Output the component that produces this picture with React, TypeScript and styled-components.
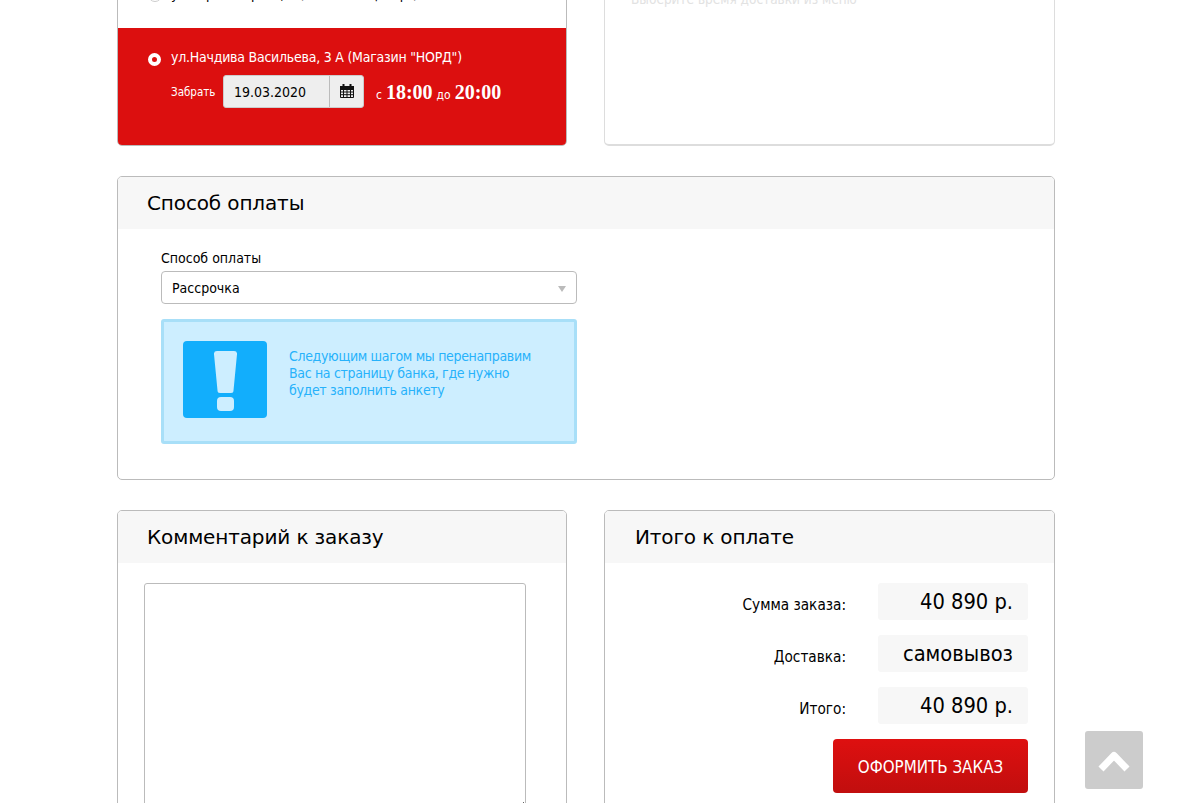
import React from "react";
import styled, { createGlobalStyle } from "styled-components";

const Global = createGlobalStyle`
  html, body { margin: 0; padding: 0; height: 100%; overflow: hidden; background: #fff; }
  * { box-sizing: border-box; }
  body { font-family: "DejaVu Sans", sans-serif; font-stretch: condensed; color: #000; }
`;

const Viewport = styled.div`
  height: 803px;
  overflow: hidden;
  position: relative;
`;
const Page = styled.div`
  width: 938px;
  margin: -72px 0 0 117px;
  display: flex;
  flex-direction: column;
  gap: 30px;
`;
const Row = styled.div`
  display: grid;
  grid-template-columns: 450px 451px;
  column-gap: 37px;
`;
const Card = styled.section<{ $height?: number }>`
  border: 1px solid #bbb;
  border-radius: 5px;
  overflow: hidden;
  background: #fff;
  height: ${(p) => (p.$height ? `${p.$height}px` : "auto")};
`;
const SoftCard = styled(Card)`
  border: 1px solid #ddd;
  border-bottom-width: 2px;
  padding: 62px 0 0 26px;
`;
const AddressCard = styled(Card)`
  display: flex;
  flex-direction: column;
  justify-content: flex-end;
`;
const Header = styled.h2<{ $inset?: number }>`
  margin: 0;
  height: 52px;
  padding: 0 0 0 ${(p) => p.$inset ?? 29}px;
  background: #f7f7f7;
  font-family: "DejaVu Sans", sans-serif;
  font-stretch: normal;
  font-weight: 400;
  font-size: 20px;
  line-height: 53px;
  letter-spacing: -0.13px;
  color: #000;
`;
const Hint = styled.p`
  margin: 0;
  font-size: 13.5px;
  color: #e2e2e2;
`;
const PlainAddress = styled.div`
  height: 100px;
  padding: 56px 0 0 30px;
  display: flex;
  gap: 9px;
  font-size: 14px;
  letter-spacing: -0.24px;
  line-height: 18px;
`;
const RadioOff = styled.span`
  flex: none;
  width: 14px;
  height: 14px;
  margin-top: 3px;
  border: 1px solid #ccc;
  border-radius: 50%;
  background: #fff;
`;
const RedAddress = styled.div`
  height: 118px;
  background: #dc0f0f;
  padding: 20px 0 0 30px;
  color: #fff;
`;
const AddressLine = styled.div`
  display: flex;
  align-items: center;
  gap: 10px;
  font-size: 14px;
  letter-spacing: -0.24px;
  line-height: 18px;
`;
const RadioOn = styled.span`
  width: 13px;
  height: 13px;
  border-radius: 50%;
  border: 4px solid #fff;
  background: #dc0f0f;
  margin-top: 4px;
`;
const PickupLine = styled.div`
  display: flex;
  align-items: center;
  margin: 9px 0 0 23px;
`;
const PickupLabel = styled.span`
  font-size: 11.5px;
  width: 52px;
`;
const DateBox = styled.div`
  display: flex;
  width: 141px;
  height: 33px;
  border-radius: 3px;
  background: #eee;
  border: 1px solid #ccc;
  color: #000;
  overflow: hidden;
`;
const DateValue = styled.span`
  width: 106px;
  padding-left: 10px;
  border-right: 1px solid #bbb;
  font-size: 14px;
  line-height: 32px;
`;
const DateIcon = styled.span`
  flex: 1;
  display: flex;
  align-items: center;
  justify-content: center;
  padding-bottom: 2px;
`;
const TimeLine = styled.span`
  margin-left: 12px;
  padding-top: 2px;
  font-size: 12px;
  display: flex;
  align-items: baseline;
  gap: 4px;
`;
const Time = styled.b`
  font-family: "Liberation Serif", serif;
  font-stretch: normal;
  font-size: 20px;
  font-weight: 700;
`;
const PaymentBody = styled.div`
  height: 250px;
  padding: 20px 0 0 43px;
`;
const FieldLabel = styled.label`
  display: block;
  font-size: 14px;
  line-height: 18px;
  height: 22px;
`;
const Select = styled.div`
  position: relative;
  width: 416px;
  height: 33px;
  border: 1px solid #bbb;
  border-radius: 4px;
  padding-left: 10px;
  font-size: 14px;
  line-height: 32px;
  &::after {
    content: "";
    position: absolute;
    right: 10px;
    top: 14px;
    border: 4px solid transparent;
    border-top: 6px solid #bbb;
    border-bottom: 0;
  }
`;
const Notice = styled.div`
  width: 416px;
  height: 125px;
  margin-top: 15px;
  padding: 19px 0 0 19px;
  display: flex;
  gap: 22px;
  background: #cdeeff;
  border: 3px solid #a8dff8;
  border-radius: 3px;
`;
const NoticeIcon = styled.div`
  flex: none;
  width: 84px;
  height: 77px;
  padding: 10px 0 0 31px;
  background: #12aefc;
  border-radius: 4px;
`;
const NoticeText = styled.p`
  margin: 7px 0 0;
  font-size: 14px;
  letter-spacing: -0.33px;
  line-height: 17px;
  color: #27b2fb;
`;
const CommentBody = styled.div`
  padding: 20px 0 0 26px;
  height: 300px;
`;
const Comment = styled.textarea`
  display: block;
  width: 382px;
  height: 228px;
  border: 1px solid #bbb;
  border-radius: 3px;
  background: #fff;
`;
const TotalsBody = styled.div`
  padding: 20px 26px 0 0;
  height: 300px;
  display: flex;
  flex-direction: column;
  align-items: flex-end;
  gap: 15px;
`;
const TotalRow = styled.div`
  display: flex;
  align-items: center;
  gap: 32px;
`;
const TotalLabel = styled.span`
  font-size: 15.2px;
  padding-top: 7px;
`;
const TotalValue = styled.span`
  width: 150px;
  height: 37px;
  padding-right: 15px;
  background: #f7f7f7;
  border-radius: 3px;
  text-align: right;
  font-size: 21.7px;
  line-height: 38px;
`;
const OrderButton = styled.button`
  width: 195px;
  height: 54px;
  border: 0;
  border-radius: 4px;
  background: linear-gradient(#de1010, #c10e0e);
  color: #fff;
  font-family: inherit;
  font-stretch: condensed;
  font-size: 16.8px;
  padding-top: 2px;
`;
const BackToTop = styled.button`
  position: absolute;
  left: 1085px;
  top: 731px;
  width: 58px;
  height: 58px;
  border: 0;
  border-radius: 3px;
  background: #ccc;
  display: flex;
  justify-content: center;
  padding: 19px 0 0;
`;

const CalendarGlyph = () => (
  <svg width="14" height="14" viewBox="0 0 14 14">
    <path
      d="M.5 2.500h13v11H.5zM.5 5.500h13M.5 8h13M.5 10.700h13M3.500 5.500v8M7 5.500v8M10.500 5.500v8"
      fill="none"
      stroke="#111"
      strokeWidth="1"
    />
    <path d="M0 2h14v3.500H0z" fill="#111" />
    <path d="M2.500 0h2v3h-2zM9.500 0h2v3h-2z" fill="#111" />
  </svg>
);

const ChevronGlyph = () => (
  <svg width="34" height="23" viewBox="0 0 34 23">
    <path d="M4 19 17 5.500 30 19" fill="none" stroke="#fff" strokeWidth="7" strokeLinejoin="round" />
  </svg>
);

const ExclamationGlyph = () => (
  <svg width="23" height="60" viewBox="0 0 23 60" style={{ display: "block" }}>
    <path
      d="M3 0h17a3 3 0 0 1 3 3.300L19.500 39.500a2.500 2.500 0 0 1-2.500 2.500H6a2.500 2.500 0 0 1-2.500-2.500L0 3.300A3 3 0 0 1 3 0z"
      fill="#cdeeff"
    />
    <rect x="3" y="46" width="17" height="14" rx="4" fill="#cdeeff" />
  </svg>
);

export default function App() {
  return (
    <Viewport>
      <Global />
      <Page>
        <Row>
          <AddressCard $height={218}>
            <PlainAddress>
              <RadioOff />
              <span>ул.Карла Маркса, 8 (Магазин "Центр")</span>
            </PlainAddress>
            <RedAddress>
              <AddressLine>
                <RadioOn />
                <span>ул.Начдива Васильева, 3 А (Магазин "НОРД")</span>
              </AddressLine>
              <PickupLine>
                <PickupLabel>Забрать</PickupLabel>
                <DateBox>
                  <DateValue>19.03.2020</DateValue>
                  <DateIcon><CalendarGlyph /></DateIcon>
                </DateBox>
                <TimeLine>
                  с <Time>18:00</Time> до <Time>20:00</Time>
                </TimeLine>
              </PickupLine>
            </RedAddress>
          </AddressCard>
          <SoftCard $height={218}>
            <Hint>Выберите время доставки из меню</Hint>
          </SoftCard>
        </Row>
        <Card>
          <Header>Способ оплаты</Header>
          <PaymentBody>
            <FieldLabel>Способ оплаты</FieldLabel>
            <Select>Рассрочка</Select>
            <Notice>
              <NoticeIcon>
                <ExclamationGlyph />
              </NoticeIcon>
              <NoticeText>
                Следующим шагом мы перенаправим<br />
                Вас на страницу банка, где нужно<br />
                будет заполнить анкету
              </NoticeText>
            </Notice>
          </PaymentBody>
        </Card>
        <Row>
          <Card $height={352}>
            <Header>Комментарий к заказу</Header>
            <CommentBody>
              <Comment />
            </CommentBody>
          </Card>
          <Card $height={352}>
            <Header $inset={30}>Итого к оплате</Header>
            <TotalsBody>
              <TotalRow>
                <TotalLabel>Сумма заказа:</TotalLabel>
                <TotalValue>40 890 р.</TotalValue>
              </TotalRow>
              <TotalRow>
                <TotalLabel>Доставка:</TotalLabel>
                <TotalValue>самовывоз</TotalValue>
              </TotalRow>
              <TotalRow>
                <TotalLabel>Итого:</TotalLabel>
                <TotalValue>40 890 р.</TotalValue>
              </TotalRow>
              <OrderButton>ОФОРМИТЬ ЗАКАЗ</OrderButton>
            </TotalsBody>
          </Card>
        </Row>
      </Page>
      <BackToTop aria-label="Наверх"><ChevronGlyph /></BackToTop>
    </Viewport>
  );
}
